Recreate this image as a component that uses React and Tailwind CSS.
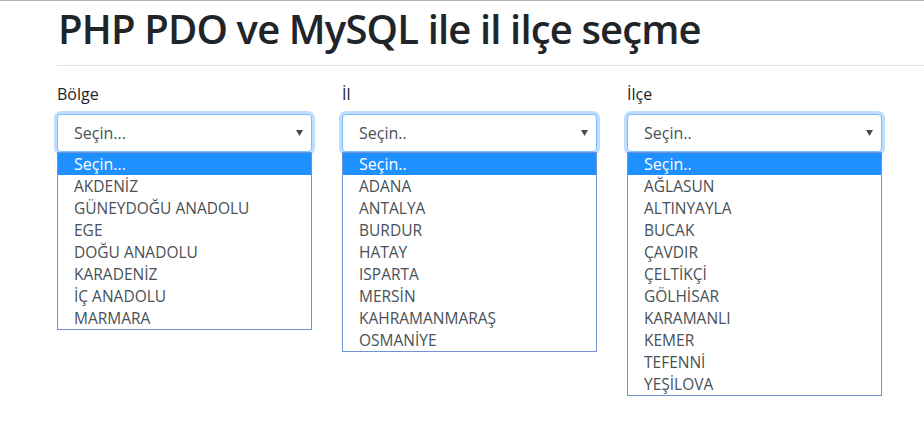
import React from "react";

const columns = [
  {
    label: "Bölge",
    placeholder: "Seçin...",
    items: ["AKDENİZ", "GÜNEYDOĞU ANADOLU", "EGE", "DOĞU ANADOLU", "KARADENİZ", "İÇ ANADOLU", "MARMARA"],
  },
  {
    label: "İl",
    placeholder: "Seçin..",
    items: ["ADANA", "ANTALYA", "BURDUR", "HATAY", "ISPARTA", "MERSİN", "KAHRAMANMARAŞ", "OSMANİYE"],
  },
  {
    label: "İlçe",
    placeholder: "Seçin..",
    items: ["AĞLASUN", "ALTINYAYLA", "BUCAK", "ÇAVDIR", "ÇELTİKÇİ", "GÖLHİSAR", "KARAMANLI", "KEMER", "TEFENNİ", "YEŞİLOVA"],
  },
];

function OpenSelect({ label, placeholder, items }) {
  return (
    <div className="w-[255px]">
      <label className="block text-[16px] leading-6 text-[#212529] mb-[8px]">{label}</label>
      <div className="relative h-[38px] rounded-[4px] border border-[#80bdff] bg-white shadow-[0_0_0_3px_rgba(0,123,255,0.25)] flex items-center pl-[16px] pr-[8px]">
        <span className="flex-1 text-[16px] text-[#495057]">{placeholder}</span>
        <svg width="7" height="6" viewBox="0 0 7 6" className="fill-[#4a4a4a]">
          <path d="M0 0h7L3.5 6z" />
        </svg>
      </div>
      {/* native listbox popup */}
      <div className="relative z-10 border border-[#6f93d6] bg-white">
        <div className="h-[22px] leading-[22px] pl-[16px] bg-[#1e90ff] text-white text-[16px]">{placeholder}</div>
        {items.map(it => (
          <div key={it} className="h-[22px] leading-[22px] pl-[16px] text-[15.5px] text-[#495057]">{it}</div>
        ))}
      </div>
    </div>
  );
}

export default function App() {
  return (
    <div className="h-[431px] bg-white border-t border-[#b0b0b0] font-['Segoe_UI','Open_Sans',sans-serif] overflow-hidden">
      <div className="pl-[57px]">
        <h1 className="text-[40px] leading-[48px] font-semibold tracking-[-0.85px] text-[#212529] pt-[4px] pl-[1px]">PHP PDO ve MySQL ile il ilçe seçme</h1>
        <hr className="mt-[12px] border-[#e3e3e3]" />
        <div className="flex gap-[30px] mt-[16px]">
          {columns.map(c => (
            <OpenSelect key={c.label} {...c} />
          ))}
        </div>
      </div>
    </div>
  );
}
